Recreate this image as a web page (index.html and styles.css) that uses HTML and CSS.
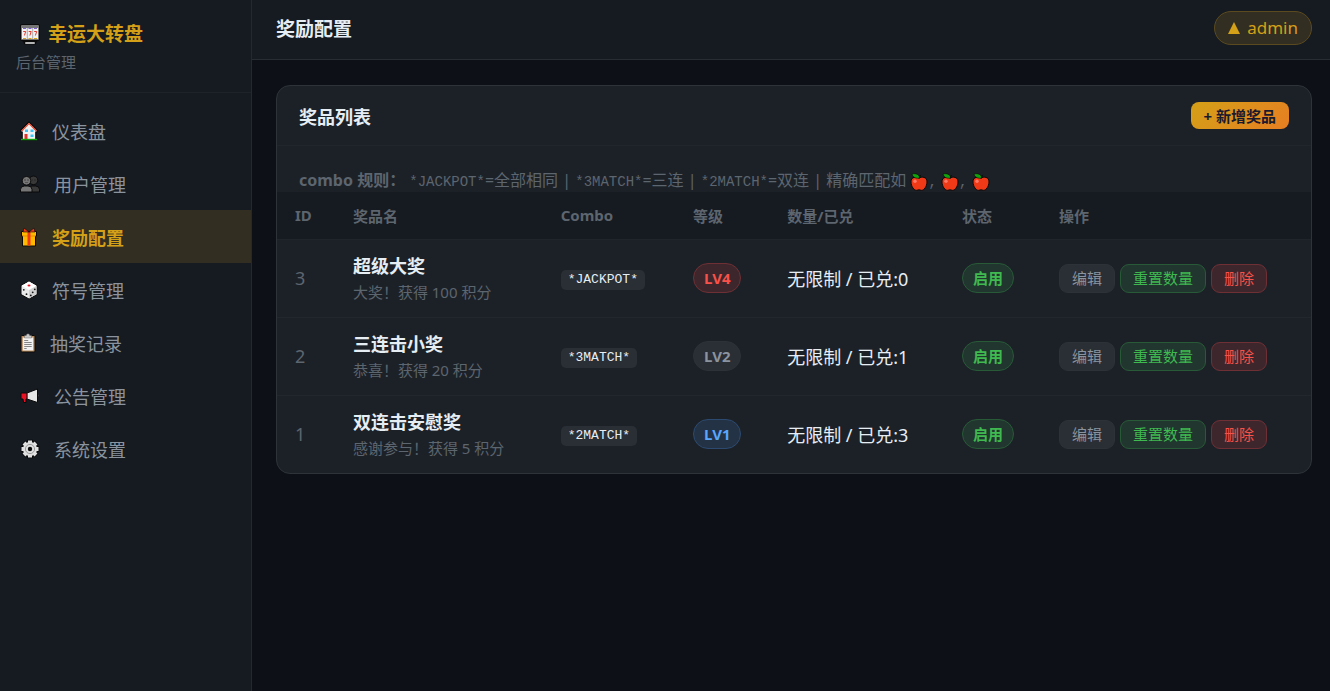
FILE: index.html
```html
<!DOCTYPE html>
<html lang="zh-CN">
<head>
  <meta charset="UTF-8" />
  <meta name="viewport" content="width=device-width, initial-scale=1.0" />
  <title>奖励配置</title>
  <link rel="stylesheet" href="styles.css">
</head>
<body>
  <svg class="sprite" aria-hidden="true">
    <symbol id="apple" viewBox="0 0 18 18">
      <path d="M9 5.2C6.500 3.200 .8 3.800 1 9c.2 4.500 3 8.500 5.600 8.300 1-.1 1.600-.5 2.400-.5s1.400.4 2.400.5C14 17.500 16.800 13.500 17 9c.2-5.200-5.500-5.800-8-3.800z" fill="#f03a17" stroke="#0a0a0a" stroke-width="1" />
      <circle cx="5" cy="8.300" r="1.700" fill="#ff7a66" />
      <path d="M2 1C5.500 0 9.200 1 9.800 5 6.500 5.800 3 4.800 2 1z" fill="#13a10e" stroke="#0a0a0a" stroke-width=".6" />
      <path d="M9.500 5.200c0-1.500.6-2.600 1.600-3.200" fill="none" stroke="#0a0a0a" stroke-width="1" />
    </symbol>
  </svg>

  <div class="layout">
    <aside class="sidebar">
      <div class="logo">
        <div class="logo-title">
          <svg width="22" height="22" viewBox="0 0 22 22">
            <path d="M1 2.500Q1 1 3 1h16q2 0 2 1.500V17l-3 1.500-1.500 3h-11L4 18.500 1 17z" fill="#0a0a0a" />
            <rect x="2" y="2" width="18" height="15" rx="1" fill="#767676" />
            <rect x="3" y="5" width="16" height="11" fill="#f2f2f2" />
            <path d="M4 5.500h3M9.500 5.500h3M15 5.500h3" stroke="#7b5fd0" stroke-width="1" />
            <path d="M4 15.500h3M9.500 15.500h3M15 15.500h3" stroke="#d9a21b" stroke-width="1" />
            <path d="M8.300 5v11M13.700 5v11" stroke="#9b9b9b" stroke-width=".8" />
            <path d="M4.200 8.500h2.500l-1.300 4M9.700 8.500h2.500l-1.300 4M15.200 8.500h2.500l-1.300 4" fill="none" stroke="#e8392b" stroke-width="1" />
            <rect x="6" y="19" width="10" height="2" rx="1" fill="#b5b5b5" />
          </svg>
          <span>幸运大转盘</span>
        </div>
        <div class="logo-sub">后台管理</div>
      </div>
      <nav class="nav">
        <a href="#">
          <svg width="18" height="20" viewBox="0 0 18 20">
            <path d="M9 1 1 9v2h1.200v8h13.600v-8H17V9z" fill="#f2f2f2" stroke="#0a0a0a" stroke-width="1.200" />
            <path d="M1.600 10 9 2.500 16.400 10" fill="none" stroke="#e8462c" stroke-width="1.200" />
            <rect x="4.500" y="13" width="3" height="5.500" fill="#e5352b" />
            <path d="M5 8.500h3v2.500H5zM10.500 8.500h3v2.500h-3zM10.500 13.500h3v2.500h-3z" fill="#3dc5f5" />
            <path d="M1 18.500h16" stroke="#13a10e" stroke-width="1.400" />
          </svg>
          <span>仪表盘</span>
        </a>
        <a href="#">
          <svg width="20" height="18" viewBox="0 0 20 18">
            <circle cx="13.500" cy="5.300" r="4.300" fill="#393939" stroke="#0a0a0a" />
            <path d="M8 17v-2.500q0-3.500 4-3.500h3.500q4 0 4 3.500V17z" fill="#393939" stroke="#0a0a0a" />
            <circle cx="6.500" cy="5.800" r="4.300" fill="#767676" stroke="#0a0a0a" />
            <path d="M.5 17v-2.500Q.5 11 4.500 11h3.500q4 0 4 3.500V17z" fill="#767676" stroke="#0a0a0a" />
            <path d="M4.500 5h1M7.500 5h1M12.500 5h.5M14.500 5h1" stroke="#191919" stroke-width="1" />
            <path d="M5 7.500h3" stroke="#4a4a4a" stroke-width=".8" />
          </svg>
          <span>用户管理</span>
        </a>
        <a href="#" class="active">
          <svg width="18" height="20" viewBox="0 0 18 20">
            <path d="M1.500 4.500h15V9h-1v10h-13V9h-1z" fill="#ffb900" stroke="#0a0a0a" />
            <path d="M2.500 9h13" stroke="#e58a00" stroke-width="1" />
            <rect x="7.500" y="5" width="3" height="13.500" fill="#f03a17" />
            <path d="M9 5 4 1 3 5zM9 5l5-4 1 4z" fill="#f03a17" stroke="#0a0a0a" stroke-width=".6" />
          </svg>
          <span>奖励配置</span>
        </a>
        <a href="#">
          <svg width="18" height="20" viewBox="0 0 18 20">
            <path d="M9 1 17 5.500v9L9 19l-8-4.500v-9z" fill="#e9e9e9" stroke="#0a0a0a" stroke-width="1" />
            <path d="M9 1.600 16.400 5.800 9 10 1.600 5.800z" fill="#fff" />
            <path d="M16.500 6 9 10.200v8.200l7.500-4.200z" fill="#cfcfcf" />
            <ellipse cx="9" cy="5.600" rx="1.500" ry="1" fill="#e81224" />
            <g fill="#151515">
              <circle cx="3.800" cy="9.800" r=".9" /><circle cx="6.500" cy="14.200" r=".9" />
              <circle cx="10.800" cy="15.400" r=".9" /><circle cx="12.700" cy="12.300" r=".9" /><circle cx="14.800" cy="9.300" r=".9" />
            </g>
          </svg>
          <span>符号管理</span>
        </a>
        <a href="#">
          <svg width="16" height="20" viewBox="0 0 16 20">
            <rect x="1" y="2.500" width="14" height="16.500" rx="1" fill="#b88a5b" stroke="#0a0a0a" />
            <path d="M2.800 4.500h10.400v13H2.800z" fill="#f2f2f2" />
            <path d="M4.500 2.500h1.800q0-1.700 1.700-1.700t1.700 1.700h1.800V5h-7z" fill="#c7c7c7" stroke="#555" stroke-width=".4" />
            <path d="M4.200 7.500h4M4.200 9.500h7.500M4.200 11.500h7.500M4.200 13.500h7.500M4.200 15.500h2.500" stroke="#6b6b6b" stroke-width=".8" />
          </svg>
          <span>抽奖记录</span>
        </a>
        <a href="#">
          <svg width="20" height="16" viewBox="0 0 20 16">
            <path d="M1 5h6v6H6v3.500H3.500L3 11H1z" fill="#e81224" stroke="#0a0a0a" />
            <path d="M7 5 17.500 1v13.500L7 11z" fill="#e6e6e6" stroke="#0a0a0a" />
            <path d="M7 5.500v5" stroke="#a80f1d" stroke-width="1" />
            <path d="M18 6.500q1.500 1.300 0 2.600z" fill="#bdbdbd" stroke="#0a0a0a" stroke-width=".6" />
          </svg>
          <span>公告管理</span>
        </a>
        <a href="#">
          <svg width="20" height="20" viewBox="0 0 20 20">
            <g stroke="#0a0a0a" stroke-width="6"><path d="M10 .8v18.400M.8 10h18.400M3.500 3.500l13 13M16.500 3.500l-13 13" /></g>
            <g stroke="#e0e0e0" stroke-width="4"><path d="M10 1.500v17M1.500 10h17M4 4l12 12M16 4 4 16" /></g>
            <circle cx="10" cy="10" r="7" fill="#e0e0e0" />
            <circle cx="10" cy="10" r="4.600" fill="none" stroke="#9a9a9a" stroke-width="1" />
            <circle cx="10" cy="10" r="2.200" fill="#0a0a0a" />
          </svg>
          <span>系统设置</span>
        </a>
      </nav>
    </aside>

    <div class="main">
      <header class="topbar">
        <h1>奖励配置</h1>
        <a href="#" class="user">
          <svg width="12" height="12" viewBox="0 0 12 12"><path d="M6 0 12 12H0z" fill="currentColor" /></svg>
          <span>admin</span>
        </a>
      </header>

      <main class="content">
        <section class="card">
          <div class="card-header">
            <h2>奖品列表</h2>
            <button type="button" class="btn-add">+ 新增奖品</button>
          </div>
          <div class="rules">
            <strong>combo 规则：</strong>
            <code>*JACKPOT*</code>=全部相同 | <code>*3MATCH*</code>=三连 | <code>*2MATCH*</code>=双连 | 精确匹配如
            <svg class="apple" width="18" height="18"><use href="#apple" /></svg><code>,</code>
            <svg class="apple" width="18" height="18"><use href="#apple" /></svg><code>,</code>
            <svg class="apple" width="18" height="18"><use href="#apple" /></svg>
          </div>
          <table>
            <thead>
              <tr>
                <th class="col-id">ID</th>
                <th class="col-name">奖品名</th>
                <th class="col-combo">Combo</th>
                <th class="col-level">等级</th>
                <th class="col-count">数量/已兑</th>
                <th class="col-status">状态</th>
                <th>操作</th>
              </tr>
            </thead>
            <tbody>
              <tr>
                <td class="id">3</td>
                <td><div class="name">超级大奖</div><div class="desc">大奖！获得 100 积分</div></td>
                <td><code class="combo">*JACKPOT*</code></td>
                <td><span class="badge red">LV4</span></td>
                <td>无限制 / 已兑:0</td>
                <td><span class="badge green">启用</span></td>
                <td>
                  <div class="actions">
                    <button type="button" class="btn gray">编辑</button>
                    <button type="button" class="btn green">重置数量</button>
                    <button type="button" class="btn red">删除</button>
                  </div>
                </td>
              </tr>
              <tr>
                <td class="id">2</td>
                <td><div class="name">三连击小奖</div><div class="desc">恭喜！获得 20 积分</div></td>
                <td><code class="combo">*3MATCH*</code></td>
                <td><span class="badge gray">LV2</span></td>
                <td>无限制 / 已兑:1</td>
                <td><span class="badge green">启用</span></td>
                <td>
                  <div class="actions">
                    <button type="button" class="btn gray">编辑</button>
                    <button type="button" class="btn green">重置数量</button>
                    <button type="button" class="btn red">删除</button>
                  </div>
                </td>
              </tr>
              <tr>
                <td class="id">1</td>
                <td><div class="name">双连击安慰奖</div><div class="desc">感谢参与！获得 5 积分</div></td>
                <td><code class="combo">*2MATCH*</code></td>
                <td><span class="badge blue">LV1</span></td>
                <td>无限制 / 已兑:3</td>
                <td><span class="badge green">启用</span></td>
                <td>
                  <div class="actions">
                    <button type="button" class="btn gray">编辑</button>
                    <button type="button" class="btn green">重置数量</button>
                    <button type="button" class="btn red">删除</button>
                  </div>
                </td>
              </tr>
            </tbody>
          </table>
        </section>
      </main>
    </div>
  </div>
</body>
</html>
```
FILE: styles.css
```css
* {
  box-sizing: border-box;
}
body {
  margin: 0;
  font-family: "Noto Sans", "Noto Sans CJK SC", sans-serif;
  font-size: 18px;
  color: #e6edf3;
  background: #0d1017;
}
h1, h2 {
  margin: 0;
}
a {
  color: inherit;
  text-decoration: none;
}
button {
  font-family: inherit;
  cursor: pointer;
}
code {
  font-family: "Liberation Mono", monospace;
  font-size: 13px;
}
.sprite {
  display: none;
}
.layout {
  display: flex;
  min-height: 100vh;
}

/* sidebar */
.sidebar {
  flex: 0 0 252px;
  background: #161b22;
  border-right: 1px solid #24282f;
}
.logo {
  padding: 20px 16px 16px;
  border-bottom: 1px solid #1e232a;
}
.logo-title {
  display: flex;
  align-items: center;
  gap: 7px;
  padding-left: 3px;
  font-size: 19px;
  font-weight: 700;
  line-height: 28px;
  color: #d4a017;
}
.logo-sub {
  font-size: 15px;
  line-height: 28px;
  color: #5d656e;
}
.nav {
  padding-top: 11px;
}
.nav a {
  display: flex;
  align-items: center;
  gap: 14px;
  height: 53px;
  padding: 0 20px;
  color: #8b949e;
}
.nav a.active {
  background: #332e22;
  color: #d4a017;
  font-weight: 700;
}

/* main */
.main {
  flex: 1;
  min-width: 0;
}
.topbar {
  display: flex;
  align-items: center;
  justify-content: space-between;
  height: 60px;
  padding: 0 18px 4px 24px;
  background: #161b22;
  border-bottom: 1px solid #282c33;
}
.topbar h1 {
  font-size: 19px;
}
.user {
  display: flex;
  align-items: center;
  gap: 7px;
  height: 34px;
  padding: 0 13px;
  font-size: 17px;
  color: #d4a017;
  background: #332e22;
  border: 1px solid #5b4a1f;
  border-radius: 17px;
}
.content {
  padding: 25px 18px 24px 24px;
}
.card {
  overflow: hidden;
  background: #1c2128;
  border: 1px solid #2e3239;
  border-radius: 14px;
}
.card-header {
  display: flex;
  align-items: center;
  justify-content: space-between;
  height: 60px;
  padding: 0 22px;
  border-bottom: 1px solid #21262d;
}
.card-header h2 {
  font-size: 18px;
}
.btn-add {
  height: 27px;
  padding: 0 13px;
  font-size: 15px;
  font-weight: 700;
  line-height: 20px;
  color: #1a1a2e;
  background: linear-gradient(135deg, #d4a017, #e67e22);
  border: none;
  border-radius: 8px;
}
.rules {
  padding: 22px 22px 0;
  font-size: 16px;
  line-height: 24px;
  color: #5d656e;
}
.rules code {
  font-size: 14px;
  line-height: 20px;
}
.apple {
  vertical-align: text-bottom;
}

/* table */
table {
  width: 100%;
  table-layout: fixed;
  border-collapse: collapse;
}
th {
  height: 47px;
  padding: 0 18px;
  font-size: 15px;
  text-align: left;
  color: #5d656e;
  background: #161a21;
  border-bottom: 1px solid #20252c;
}
td {
  padding: 12px 18px;
  white-space: nowrap;
  border-bottom: 1px solid #22272e;
}
tbody tr:last-child td {
  border-bottom: none;
}
.col-id {
  width: 5.6%;
}
.col-name {
  width: 20.1%;
}
.col-combo {
  width: 12.8%;
}
.col-level {
  width: 9.1%;
}
.col-count {
  width: 16.9%;
}
.col-status {
  width: 9.4%;
}
.id {
  color: #5d656e;
}
.name {
  font-weight: 700;
  line-height: 28px;
}
.desc {
  font-size: 15px;
  line-height: 25px;
  color: #5d656e;
}
.combo {
  display: inline-block;
  padding: 0 7px;
  line-height: 20px;
  vertical-align: middle;
  background: #2a2e35;
  border-radius: 5px;
}
.badge {
  display: inline-block;
  padding: 0 10px;
  font-size: 15px;
  font-weight: 700;
  line-height: 28px;
  vertical-align: middle;
  border: 1px solid;
  border-radius: 15px;
}
.actions {
  display: flex;
  gap: 5px;
}
.btn {
  padding: 0 12px;
  font-size: 15px;
  line-height: 27px;
  border: 1px solid;
  border-radius: 9px;
}
.red {
  color: #f85149;
  background: #3e272c;
  border-color: #6e3035;
}
.green {
  color: #3fb950;
  background: #21362e;
  border-color: #285a38;
}
.blue {
  color: #58a6ff;
  background: #243245;
  border-color: #2c4a70;
}
.gray {
  color: #8b949e;
  background: #2a2e35;
  border-color: #2d3138;
}
```
